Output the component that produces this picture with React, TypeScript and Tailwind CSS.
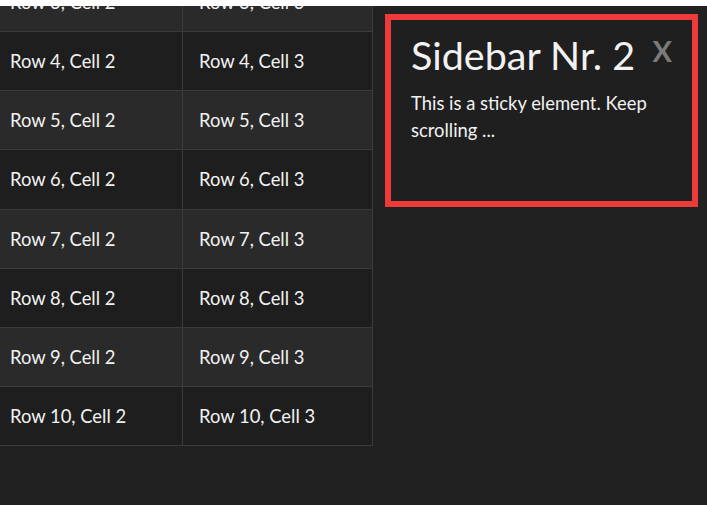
const rows = [3, 4, 5, 6, 7, 8, 9, 10];

export default function App() {
  return (
    <div className="relative h-[505px] w-[707px] overflow-hidden bg-[#212121] text-[#f2f2f2] font-['Lato','Liberation_Sans',sans-serif]">
      {/* top bar that overlays the scrolled table */}
      <div className="absolute left-0 top-0 z-10 h-[6px] w-full bg-white" />

      <div className="flex items-start">
        <div className="-mt-[27px] w-[373px] border-r border-[#3b3b3b]">
          {rows.map((n) => (
            <div
              key={n}
              className={
                "flex border-b border-[#3b3b3b] text-[18.4px] leading-[26.14px] " +
                (n % 2 === 0 ? "bg-[#1e1e1e]" : "bg-[#2a2a2a]")
              }
            >
              <div className="w-[183px] border-r border-[#3b3b3b] py-4 pl-[10px]">Row {n}, Cell 2</div>
              <div className="flex-1 py-4 pl-[16px]">Row {n}, Cell 3</div>
            </div>
          ))}
        </div>

        <aside className="ml-[12px] mt-[14px] h-[193px] w-[313px] border-[6px] border-[#ef3a3a] bg-[#1f1f1f] px-5 pt-[11px]">
          <div className="flex items-start justify-between">
            <h2 className="text-[39.5px] leading-[1.2]">Sidebar Nr. 2</h2>
            <span className="mt-[3px] text-[29px] font-bold leading-[1.2] text-[#7b7b7b]">X</span>
          </div>
          <p className="mt-[12px] text-[18.4px] leading-[27px]">This is a sticky element. Keep scrolling ...</p>
        </aside>
      </div>
    </div>
  );
}
